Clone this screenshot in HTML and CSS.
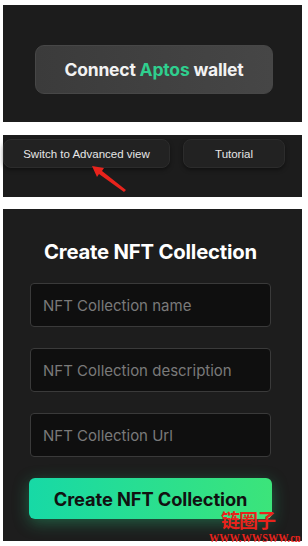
FILE: index.html
```html
<!DOCTYPE html>
<html>
<head>
<meta charset="utf-8">
<link rel="stylesheet" href="styles.css">
</head>
<body>
<div class="page">
  <section class="panel panel-connect">
    <button class="connect-btn">Connect <span class="aptos">Aptos</span> wallet</button>
  </section>
  <section class="panel panel-tabs">
    <button class="tab-btn tab-switch">Switch to Advanced view</button>
    <button class="tab-btn tab-tutorial">Tutorial</button>
    <svg class="arrow" width="40" height="30" viewBox="0 0 40 30">
      <polygon points="2,2 14,4 12,7 36,26 34,28 9,10 7,13" fill="#e8231c"/>
    </svg>
  </section>
  <section class="panel panel-form">
    <h1 class="form-title">Create NFT Collection</h1>
    <div class="field">NFT Collection name</div>
    <div class="field">NFT Collection description</div>
    <div class="field">NFT Collection Url</div>
    <button class="create-btn">Create NFT Collection</button>
    <div class="watermark">
      <div class="wm-cn">链圈子</div>
      <div class="wm-url">WWW.WWSWW.cn</div>
    </div>
  </section>
</div>
</body>
</html>
```

FILE: styles.css
```css
html, body {
  margin: 0;
  padding: 0;
  background: #ffffff;
}
.page {
  width: 308px;
  height: 546px;
  padding: 5px 0 0 3px;
  box-sizing: border-box;
  display: flex;
  flex-direction: column;
  font-family: Inter, "Liberation Sans", sans-serif;
}
.panel {
  background: #1c1c1c;
  width: 299px;
  box-sizing: border-box;
}
.panel-connect {
  height: 117px;
  display: flex;
  align-items: flex-start;
  padding: 40px 0 0 32px;
}
.connect-btn {
  width: 238px;
  height: 49px;
  border: 1px solid #474747;
  border-radius: 9px;
  background: linear-gradient(90deg, #3b3b3b, #464646);
  color: #f2f2f2;
  font-family: Inter, "Liberation Sans", sans-serif;
  font-weight: 700;
  font-size: 17.5px;
  letter-spacing: -0.2px;
  padding: 0;
}
.aptos { color: #2fcf8e; }
.panel-tabs {
  margin-top: 13px;
  height: 62px;
  position: relative;
  display: flex;
  align-items: flex-start;
  padding-top: 4px;
  gap: 13px;
}
.tab-btn {
  height: 29px;
  background: #222222;
  border: 1px solid #2c2c2c;
  border-radius: 8px;
  color: #e6e6e6;
  font-family: "Liberation Sans", Arial, sans-serif;
  font-size: 11.5px;
  padding: 0;
  box-shadow: 0 2px 4px rgba(0,0,0,0.4);
}
.tab-switch { width: 167px; }
.tab-tutorial { width: 102px; }
.arrow {
  position: absolute;
  left: 87px;
  top: 29px;
}
.panel-form {
  margin-top: 12px;
  height: 332px;
  background: #1d1d1d;
  display: flex;
  flex-direction: column;
  align-items: center;
  position: relative;
  padding: 31px 4px 0 0;
}
.form-title {
  margin: 0 0 19px 0;
  color: #ffffff;
  font-family: Inter, "Liberation Sans", sans-serif;
  font-weight: 700;
  font-size: 20.3px;
  letter-spacing: -0.2px;
  line-height: 24px;
}
.field {
  width: 241px;
  height: 44px;
  box-sizing: border-box;
  background: #0f0f0f;
  border: 1px solid #3a3a3a;
  border-radius: 4px;
  color: #7a7a7a;
  font-size: 15px;
  display: flex;
  align-items: center;
  padding-left: 12px;
  margin-bottom: 21px;
}
.create-btn {
  width: 243px;
  height: 41px;
  border: none;
  border-radius: 6px;
  background: linear-gradient(90deg, #17d9a6, #3ce47a);
  box-shadow: 0 4px 16px rgba(40, 220, 140, 0.35);
  color: #111111;
  font-family: Inter, "Liberation Sans", sans-serif;
  font-weight: 700;
  font-size: 18.3px;
  letter-spacing: -0.1px;
  padding: 0;
}
.watermark {
  position: absolute;
  right: 2px;
  bottom: -4px;
  display: flex;
  flex-direction: column;
  align-items: flex-end;
  color: #e8231c;
  font-weight: 700;
}
.wm-cn {
  font-family: "Noto Sans CJK SC", sans-serif;
  font-size: 19px;
  line-height: 22px;
  margin-right: 25px;
  letter-spacing: -1px;
}
.wm-url {
  font-family: "Liberation Serif", serif;
  font-size: 12px;
  line-height: 14px;
  letter-spacing: 0;
  transform: scaleX(0.86);
  transform-origin: right center;
}
```
